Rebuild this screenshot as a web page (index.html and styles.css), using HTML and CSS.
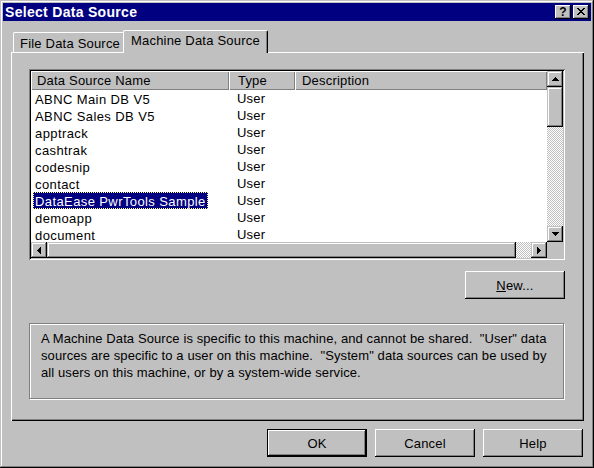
FILE: index.html
```html
<!DOCTYPE html>
<html>
<head>
<meta charset="utf-8">
<title>Select Data Source</title>
<link rel="stylesheet" href="styles.css">
</head>
<body>
<div class="window">
  <div class="titlebar">
    <span class="title">Select Data Source</span>
    <div class="tb-btns">
      <span class="tb-btn tb-help">?</span>
      <span class="tb-btn tb-close">
        <svg width="8" height="7" viewBox="0 0 8 7" shape-rendering="crispEdges"><path d="M0 0h2v1H0zM6 0h2v1H6zM1 1h2v1H1zM5 1h2v1H5zM2 2h4v1H2zM3 3h2v1H3zM2 4h4v1H2zM1 5h2v1H1zM5 5h2v1H5zM0 6h2v1H0zM6 6h2v1H6z" fill="#000"/></svg>
      </span>
    </div>
  </div>
  <div class="client">
    <div class="tabs">
      <div class="tab">File Data Source</div>
      <div class="tab active">Machine Data Source</div>
    </div>
    <div class="panel">
      <div class="listview">
        <div class="lv-main">
          <div class="lv-header">
            <div class="hc hc-name">Data Source Name</div>
            <div class="hc hc-type">Type</div>
            <div class="hc hc-desc">Description</div>
          </div>
          <div class="lv-rows">
            <div class="row"><div class="c-name"><span class="item">ABNC Main DB V5</span></div><div class="c-type">User</div><div></div></div>
            <div class="row"><div class="c-name"><span class="item">ABNC Sales DB V5</span></div><div class="c-type">User</div><div></div></div>
            <div class="row"><div class="c-name"><span class="item">apptrack</span></div><div class="c-type">User</div><div></div></div>
            <div class="row"><div class="c-name"><span class="item">cashtrak</span></div><div class="c-type">User</div><div></div></div>
            <div class="row"><div class="c-name"><span class="item">codesnip</span></div><div class="c-type">User</div><div></div></div>
            <div class="row"><div class="c-name"><span class="item">contact</span></div><div class="c-type">User</div><div></div></div>
            <div class="row"><div class="c-name"><span class="item selected">DataEase PwrTools Sample</span></div><div class="c-type">User</div><div></div></div>
            <div class="row"><div class="c-name"><span class="item">demoapp</span></div><div class="c-type">User</div><div></div></div>
            <div class="row"><div class="c-name"><span class="item">document</span></div><div class="c-type">User</div><div></div></div>
          </div>
        </div>
        <div class="vscroll">
          <div class="sb-btn"><svg width="7" height="4" viewBox="0 0 7 4" shape-rendering="crispEdges"><path d="M3 0h1v1H3zM2 1h3v1H2zM1 2h5v1H1zM0 3h7v1H0z" fill="#000"/></svg></div>
          <div class="sb-thumb v-thumb"></div>
          <div class="sb-track"></div>
          <div class="sb-btn"><svg width="7" height="4" viewBox="0 0 7 4" shape-rendering="crispEdges"><path d="M0 0h7v1H0zM1 1h5v1H1zM2 2h3v1H2zM3 3h1v1H3z" fill="#000"/></svg></div>
        </div>
        <div class="hscroll">
          <div class="sb-btn"><svg width="4" height="7" viewBox="0 0 4 7" shape-rendering="crispEdges"><path d="M3 0h1v7H3zM2 1h1v5H2zM1 2h1v3H1zM0 3h1v1H0z" fill="#000"/></svg></div>
          <div class="sb-thumb h-thumb"></div>
          <div class="sb-track"></div>
          <div class="sb-btn"><svg width="4" height="7" viewBox="0 0 4 7" shape-rendering="crispEdges"><path d="M0 0h1v7H0zM1 1h1v5H1zM2 2h1v3H2zM3 3h1v1H3z" fill="#000"/></svg></div>
        </div>
        <div class="corner"></div>
      </div>
      <div class="new-row">
        <div class="btn"><span><u>N</u>ew...</span></div>
      </div>
      <div class="group">A Machine Data Source is specific to this machine, and cannot be shared.&nbsp; "User" data<br>sources are specific to a user on this machine.&nbsp; "System" data sources can be used by<br>all users on this machine, or by a system-wide service.</div>
    </div>
    <div class="actions">
      <div class="btn default">OK</div>
      <div class="btn">Cancel</div>
      <div class="btn">Help</div>
    </div>
  </div>
</div>
</body>
</html>
```
FILE: styles.css
```css
* { box-sizing: border-box; }
html, body { margin: 0; padding: 0; }
body {
  width: 594px;
  height: 468px;
  background: #c0c0c0;
  font-family: "Liberation Sans", Arial, sans-serif;
  font-size: 13px;
  letter-spacing: 0.2px;
  color: #000;
}
.window {
  width: 594px;
  height: 468px;
  background: #c0c0c0;
  padding: 3px;
  box-shadow: inset -1px -1px 0 #000, inset 1px 1px 0 #c0c0c0, inset -2px -2px 0 #808080, inset 2px 2px 0 #fff;
}
.titlebar {
  height: 18px;
  background: #000080;
  display: flex;
  align-items: center;
  justify-content: space-between;
  padding-left: 2px;
  padding-right: 2px;
}
.title {
  color: #fff;
  font-weight: bold;
  font-size: 14px;
  letter-spacing: 0.3px;
  line-height: 18px;
}
.tb-btns { display: flex; gap: 2px; }
.tb-btn {
  width: 16px;
  height: 14px;
  background: #c0c0c0;
  display: flex;
  align-items: center;
  justify-content: center;
  box-shadow: inset -1px -1px 0 #000, inset 1px 1px 0 #fff, inset -2px -2px 0 #808080;
}
.tb-help {
  font-weight: bold;
  font-size: 12px;
  line-height: 14px;
  letter-spacing: 0;
  padding-bottom: 1px;
}
.tb-close svg { display: block; margin-bottom: 1px; }

.client {
  padding: 9px 7px 0 8px;
}
.tabs {
  display: flex;
  align-items: flex-end;
  height: 22px;
  padding-left: 2px;
}
.tab {
  height: 20px;
  width: 112px;
  padding-left: 6px;
  line-height: 21px;
  background: #c0c0c0;
  border-top: 1px solid #fff;
  border-left: 1px solid #fff;
  border-right: 1px solid #000;
  border-radius: 2px 2px 0 0;
  box-shadow: inset -1px 0 0 #808080;
}
.tab.active {
  position: relative;
  z-index: 1;
  width: 145px;
  height: 23px;
  margin-left: -2px;
  margin-bottom: -1px;
  padding-left: 7px;
  line-height: 20px;
}
.panel {
  height: 369px;
  width: 573px;
  padding: 17px 19px 0 18px;
  display: flex;
  flex-direction: column;
  box-shadow: inset 1px 1px 0 #fff, inset -1px -1px 0 #000, inset -2px -2px 0 #808080;
}
.listview {
  width: 536px;
  height: 191px;
  padding: 2px;
  display: grid;
  grid-template-columns: 516px 16px;
  grid-template-rows: 171px 16px;
  background: #fff;
  box-shadow: inset 1px 1px 0 #808080, inset -1px -1px 0 #fff, inset 2px 2px 0 #000, inset -2px -2px 0 #c0c0c0;
}
.lv-main { overflow: hidden; background: #fff; }
.lv-header {
  display: grid;
  grid-template-columns: 198px 66px 252px;
  height: 18px;
}
.hc {
  background: #c0c0c0;
  line-height: 19px;
  box-shadow: inset 1px 1px 0 #fff, inset -1px -1px 0 #808080;
  white-space: nowrap;
}
.hc-name { padding-left: 6px; }
.hc-type { padding-left: 9px; }
.hc-desc { padding-left: 7px; }
.row {
  display: grid;
  grid-template-columns: 198px 66px 252px;
  height: 17px;
  line-height: 19px;
  white-space: nowrap;
  letter-spacing: 0.4px;
}
.c-name { padding-left: 2px; }
.c-type { padding-left: 8px; letter-spacing: 0.2px; }
.item { display: inline-block; padding: 0 2px; height: 17px; margin-top: 1px; }
.item.selected {
  background: #000080;
  color: #fff;
  outline: 1px dotted #ffff80;
  outline-offset: -1px;
}
.vscroll { display: flex; flex-direction: column; }
.hscroll { display: flex; }
.sb-btn {
  width: 16px;
  height: 16px;
  flex: none;
  background: #c0c0c0;
  display: flex;
  align-items: center;
  justify-content: center;
  box-shadow: inset -1px -1px 0 #000, inset 1px 1px 0 #c0c0c0, inset -2px -2px 0 #808080, inset 2px 2px 0 #fff;
}
.sb-btn svg { display: block; }
.sb-thumb {
  background: #c0c0c0;
  flex: none;
  box-shadow: inset -1px -1px 0 #000, inset 1px 1px 0 #c0c0c0, inset -2px -2px 0 #808080, inset 2px 2px 0 #fff;
}
.v-thumb { width: 16px; height: 40px; }
.h-thumb { width: 469px; height: 16px; }
.sb-track {
  flex: 1;
  background-image: conic-gradient(#fff 25%, #c0c0c0 0 50%, #fff 0 75%, #c0c0c0 0);
  background-size: 2px 2px;
}
.corner { background: #c0c0c0; }

.new-row {
  display: flex;
  justify-content: flex-end;
  margin-top: 11px;
}
.btn {
  width: 100px;
  height: 28px;
  background: #c0c0c0;
  display: flex;
  align-items: center;
  justify-content: center;
  box-shadow: inset -1px -1px 0 #000, inset 1px 1px 0 #fff, inset -2px -2px 0 #808080;
}
.btn.default {
  border: 1px solid #000;
  box-shadow: inset -1px -1px 0 #000, inset 1px 1px 0 #fff, inset -2px -2px 0 #808080;
}
.group {
  margin-top: 24px;
  width: 535px;
  height: 76px;
  border: 1px solid #808080;
  box-shadow: inset 1px 1px 0 #fff, 1px 1px 0 #fff;
  padding: 6px 0 0 11px;
  line-height: 17px;
  white-space: nowrap;
  letter-spacing: 0.1px;
}
.actions {
  display: flex;
  justify-content: flex-end;
  gap: 8px;
  margin-top: 8px;
  padding-right: 1px;
}
```
